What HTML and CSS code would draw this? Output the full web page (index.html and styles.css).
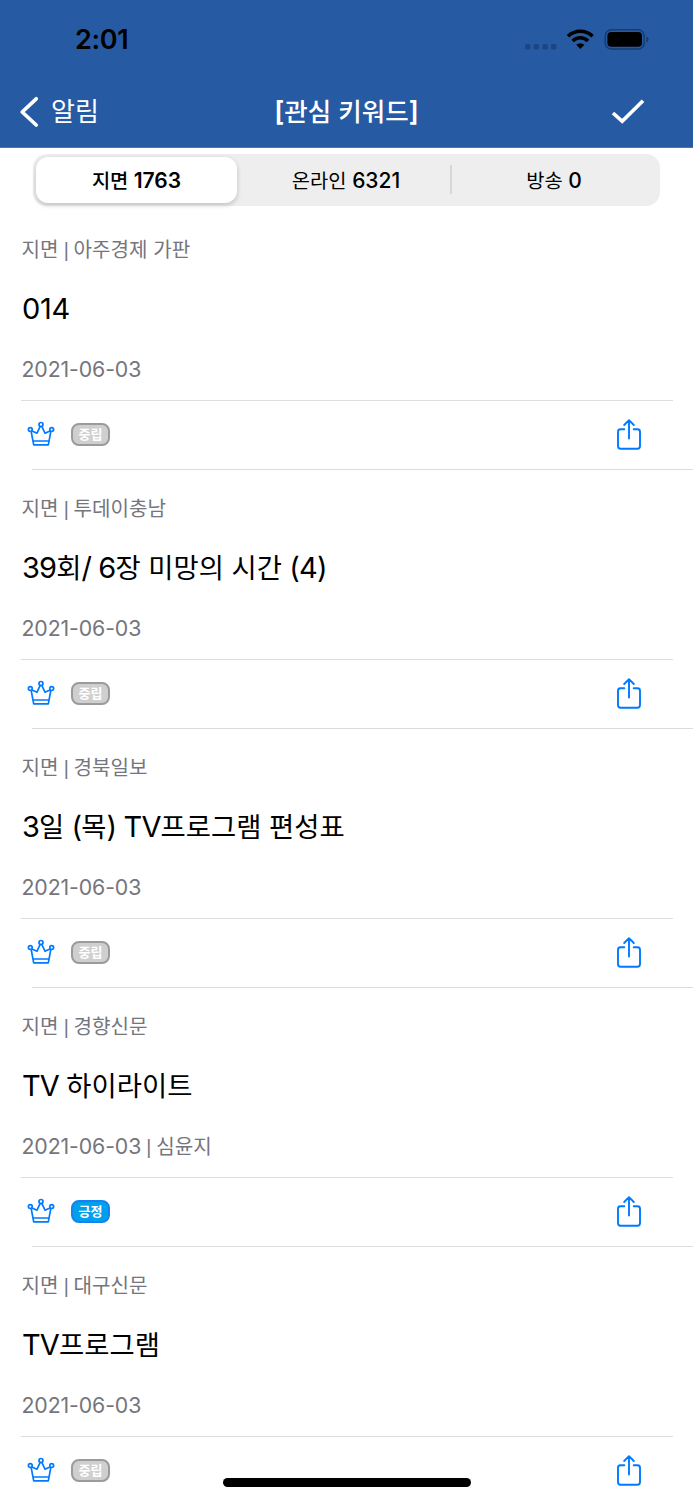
FILE: index.html
```
<!DOCTYPE html>
<html lang="ko">
<head>
<meta charset="utf-8">
<title>관심 키워드</title>
<link rel="stylesheet" href="styles.css">
</head>
<body>
<svg class="defs" width="0" height="0">
  <symbol id="crown" viewBox="0 0 28 26">
    <g fill="none" stroke="#007aff" stroke-width="1.7" stroke-linejoin="round">
      <circle cx="14" cy="3.5" r="2"/><circle cx="3.3" cy="8.6" r="1.9"/><circle cx="24.7" cy="8.6" r="1.9"/>
      <path d="M4.2 10.6 6.7 23.8H21.3L23.8 10.6M5 10 10 12.2 13.1 5.7M14.9 5.7 18 12.2 23 10M6 20H22"/>
    </g>
  </symbol>
  <symbol id="share" viewBox="0 0 28 34">
    <g fill="none" stroke="#007aff" stroke-width="1.9" stroke-linecap="round" stroke-linejoin="round">
      <path d="M9.3 11.2H5.5Q3 11.2 3 13.7V28Q3 30.7 5.5 30.7H22.5Q25 30.7 25 28V13.7Q25 11.2 22.5 11.2H18.7M14 20.5V2.2M9.2 7 14 2.2 18.8 7"/>
    </g>
  </symbol>
</svg>
<header class="header">
  <div class="status">
    <span class="time">2:01</span>
    <svg class="signal" width="124" height="24" viewBox="0 0 124 24">
      <g fill="#1d4680"><rect width="5.4" height="5.4" rx="1.6" y="16"/><rect x="8.7" width="5.4" height="5.4" rx="1.6" y="16"/><rect x="17.4" width="5.4" height="5.4" rx="1.6" y="16"/><rect x="26" width="5.4" height="5.4" rx="1.6" y="16"/></g>
      <g fill="none" stroke="#000" stroke-width="3.5"><path d="M43 8.2a17.6 17.6 0 0 1 24.600 0M47.600 12.900a10.900 10.900 0 0 1 15.400 0"/></g>
      <path d="M51.200 16.700a6.200 6.200 0 0 1 8.200 0L55.300 21.100Z"/>
      <rect x="80.200" y="1.700" width="39" height="19.400" rx="6.200" fill="none" stroke="#173c70" stroke-width="1.500"/>
      <rect x="82.400" y="4" width="34.600" height="14.800" rx="3.800"/>
      <path d="M121.300 8.500q2.300 1 2.300 3t-2.300 3Z" fill="#173c70"/>
    </svg>
  </div>
  <nav class="nav">
    <a class="back"><svg width="20" height="32" viewBox="0 0 20 32"><path d="M17.200 2.800 3.200 16 17.200 29" fill="none" stroke="#fff" stroke-width="3.700" stroke-linecap="round" stroke-linejoin="round"/></svg><span>알림</span></a>
    <h1 class="title">[<span class="ko">관심 키워드</span>]</h1>
    <svg class="check" width="34" height="26" viewBox="0 0 34 26"><path d="M2 14 11.200 22.300 32 1.800" fill="none" stroke="#fff" stroke-width="3.700"/></svg>
  </nav>
</header>
<main>
  <div class="tabs">
    <div class="tab on"><span class="ko">지면</span> 1763</div>
    <div class="tab"><span class="ko">온라인</span> 6321</div>
    <div class="tab last"><span class="ko">방송</span> 0</div>
  </div>
  <article class="item">
    <p class="meta"><span class="ko">지면</span><span class="bar"> | </span><span class="ko">아주경제 가판</span></p>
    <h2 class="headline digits">014</h2>
    <p class="meta date">2021-06-03</p>
    <div class="actions"><svg class="crown"><use href="#crown"/></svg><span class="badge">중립</span><svg class="share"><use href="#share"/></svg></div>
  </article>
  <article class="item">
    <p class="meta"><span class="ko">지면</span><span class="bar"> | </span><span class="ko">투데이충남</span></p>
    <h2 class="headline">39<span class="ko">회</span>/ 6<span class="ko">장 미망의 시간</span> (4)</h2>
    <p class="meta date">2021-06-03</p>
    <div class="actions"><svg class="crown"><use href="#crown"/></svg><span class="badge">중립</span><svg class="share"><use href="#share"/></svg></div>
  </article>
  <article class="item">
    <p class="meta"><span class="ko">지면</span><span class="bar"> | </span><span class="ko">경북일보</span></p>
    <h2 class="headline">3<span class="ko">일</span> (<span class="ko">목</span>) TV<span class="ko">프로그램 편성표</span></h2>
    <p class="meta date">2021-06-03</p>
    <div class="actions"><svg class="crown"><use href="#crown"/></svg><span class="badge">중립</span><svg class="share"><use href="#share"/></svg></div>
  </article>
  <article class="item">
    <p class="meta"><span class="ko">지면</span><span class="bar"> | </span><span class="ko">경향신문</span></p>
    <h2 class="headline">TV <span class="ko">하이라이트</span></h2>
    <p class="meta date">2021-06-03<span class="bar"> | </span><span class="ko">심윤지</span></p>
    <div class="actions"><svg class="crown"><use href="#crown"/></svg><span class="badge positive">긍정</span><svg class="share"><use href="#share"/></svg></div>
  </article>
  <article class="item">
    <p class="meta"><span class="ko">지면</span><span class="bar"> | </span><span class="ko">대구신문</span></p>
    <h2 class="headline">TV<span class="ko">프로그램</span></h2>
    <p class="meta date">2021-06-03</p>
    <div class="actions"><svg class="crown"><use href="#crown"/></svg><span class="badge">중립</span><svg class="share"><use href="#share"/></svg></div>
  </article>
</main>
<div class="home"></div>
</body>
</html>
```
FILE: styles.css
```
* { box-sizing: border-box; margin: 0; padding: 0; }
html, body { height: 1500px; overflow: hidden; }
body { position: relative; width: 693px; background: #fff; color: #000; font-family: Inter, "Noto Sans CJK KR", sans-serif; }
.defs { display: block; }
.ko { font-family: "Noto Sans CJK KR", sans-serif; font-size: .945em; line-height: 1; letter-spacing: 0; }
.header { height: 148px; background: #265aa3; border-bottom: 1px solid #4a75b0; }
.status { display: flex; justify-content: space-between; height: 76px; padding: 24px 44px 0 75px; }
.time { font-size: 27px; font-weight: 600; line-height: 32px; letter-spacing: -.3px; }
.signal { margin-top: 4px; }
.nav { display: grid; grid-template-columns: 200px 1fr 200px; align-items: center; height: 71px; color: #fff; }
.back { display: flex; align-items: center; gap: 12px; padding-left: 19px; font: 26px/32px "Noto Sans CJK KR", sans-serif; }
.back span { margin-bottom: 3px; }
.title { font-size: 27px; font-weight: 600; line-height: 32px; text-align: center; white-space: nowrap; }
.title .ko { font-weight: 500; }
.check { justify-self: end; margin-right: 48px; }
.tabs { display: grid; grid-template-columns: 205px 210px 1fr; width: 627px; height: 52px; margin: 6px 0 5px 33px; padding: 3px; border-radius: 14px; background: #eee; }
.tab { position: relative; display: flex; align-items: center; justify-content: center; font-size: 21px; font-weight: 500; white-space: pre; }
.tab.on { margin-right: 4px; border-radius: 12px; background: #fff; box-shadow: 0 2px 5px rgba(0,0,0,.2); font-weight: 600; }
.tab.last::before { content: ""; position: absolute; left: -1px; top: 8px; width: 2px; height: 29px; background: #d8d8d8; }
.tab .ko { font-weight: 400; }
.tab.on .ko { font-weight: 500; }
.item { position: relative; height: 259.1px; padding: 22px 20px 0 22px; }
.item::after { content: ""; position: absolute; left: 32px; right: 0; bottom: 0; height: 1px; background: #dcdcde; }
.meta { height: 32px; margin-left: -.5px; line-height: 32px; font-size: 21.3px; letter-spacing: -.12px; color: #75757d; white-space: nowrap; }
.bar { font-family: "Liberation Sans", sans-serif; font-size: 19.5px; line-height: 1; letter-spacing: -.3px; white-space: pre; }
.headline { height: 40px; margin-top: 24px; font-size: 29px; font-weight: 400; line-height: 40px; letter-spacing: -.85px; white-space: nowrap; }
.headline.digits { letter-spacing: -.3px; }
.date { margin-top: 24px; }
.actions { display: flex; align-items: center; height: 68px; margin: 15px 0 0 -1px; padding: 0 30px 0 6px; border-top: 1.5px solid #dedee0; }
.crown { width: 28px; height: 26px; margin-bottom: 2px; }
.badge { display: flex; align-items: center; justify-content: center; width: 39px; height: 23px; margin-left: 16px; padding-bottom: 2px; border: 2px solid #9b9b9b; border-radius: 8px; background: #cfcfcf; color: #fff; font: 700 13px/17px "Noto Sans CJK KR", sans-serif; }
.badge.positive { background: #00a0ec; border-color: #1583ef; }
.share { width: 28px; height: 34px; margin-left: auto; }
.home { position: absolute; left: 223px; top: 1478px; width: 248px; height: 9px; border-radius: 5px; background: #000; }
```
